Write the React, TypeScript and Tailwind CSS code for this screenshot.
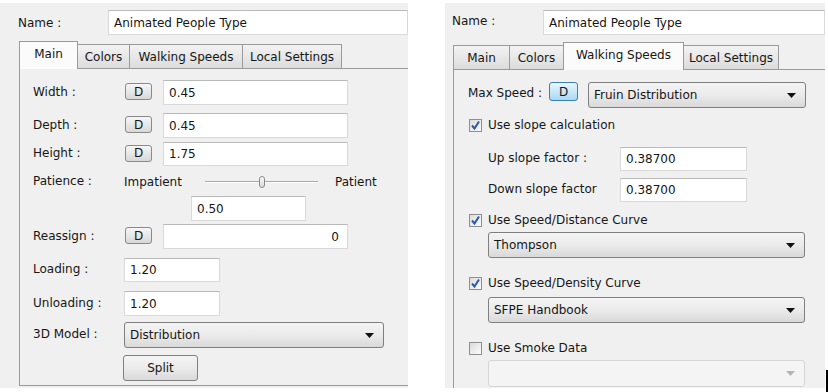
import React from "react";

const Field = ({ w, h = 25, value, right = false, grow = false }: { w?: number; h?: number; value: string; right?: boolean; grow?: boolean }) => (
  <div
    className={`${grow ? "flex-1" : ""} flex items-center bg-white border border-[#d9d9d9] border-t-[#b9b9b9] px-[5px] ${right ? "justify-end pr-[8px]" : ""}`}
    style={{ width: w, height: h }}
  >
    <span className="whitespace-nowrap">{value}</span>
  </div>
);

const DBtn = ({ blue = false, w = 27, h = 17 }: { blue?: boolean; w?: number; h?: number }) => (
  <div
    className={`flex items-center justify-center rounded-[3px] border text-[12px] ${
      blue
        ? "border-[#3c7fb1] bg-gradient-to-b from-[#e9f6fd] to-[#a8d9f4]"
        : "border-[#8a8a8a] bg-gradient-to-b from-[#f6f6f6] to-[#d8d8d8]"
    }`}
    style={{ width: w, height: h }}
  >
    D
  </div>
);

const Arrow = ({ c = "#111" }: { c?: string }) => (
  <svg width="9" height="5" viewBox="0 0 9 5">
    <path d="M0 0 H9 L4.5 5 Z" fill={c} />
  </svg>
);

const Select = ({ w, h = 26, value, disabled = false }: { w: number; h?: number; value: string; disabled?: boolean }) => (
  <div
    className={`flex items-center justify-between rounded-[3px] border pl-[5px] pr-[9px] ${
      disabled
        ? "border-[#d6d6d6] bg-[#f4f4f4]"
        : "border-[#7f7f7f] bg-gradient-to-b from-[#f4f4f4] via-[#ebebeb] to-[#d9d9d9]"
    }`}
    style={{ width: w, height: h }}
  >
    <span className="whitespace-nowrap">{value}</span>
    <Arrow c={disabled ? "#b4b4b4" : "#111"} />
  </div>
);

const Check = ({ checked }: { checked: boolean }) => (
  <div className="w-[13px] h-[13px] border border-[#8e8f8f] bg-gradient-to-br from-[#dcdcdc] to-[#fbfbfb] flex items-center justify-center">
    {checked && (
      <svg width="11" height="11" viewBox="0 0 11 11">
        <path d="M2 5.5 L4.5 8.5 L9 1.5" stroke="#2c5aa8" strokeWidth="2" fill="none" />
      </svg>
    )}
  </div>
);

const Tab = ({ label, w, sel = false, first = false }: { label: string; w: number; sel?: boolean; first?: boolean }) => (
  <div
    className={`flex items-center justify-center border-t border-l border-r border-[#9a9a9a] whitespace-nowrap ${
      first ? "" : "-ml-px"
    } ${
      sel
        ? "h-[28px] -mb-px bg-[#fbfbfb] relative z-10 pb-[3px]"
        : "h-[24px] bg-gradient-to-b from-[#f3f3f3] to-[#dcdcdc]"
    }`}
    style={{ width: w }}
  >
    {label}
  </div>
);

const LRow = ({ label, mt, h, children }: { label: string; mt: string; h: string; children?: React.ReactNode }) => (
  <div className={`flex items-center ${mt} ${h}`}>
    <span className="pl-[13px] w-[104px] shrink-0 whitespace-nowrap -mt-[2px]">{label}</span>
    {children}
  </div>
);

export default function App() {
  return (
    <div className="w-[828px] h-[392px] bg-white flex items-start overflow-hidden font-['DejaVu_Sans',Tahoma,sans-serif] text-[12px] text-[#161616]">
      {/* Left panel */}
      <div className="mt-[3px] w-[408px] h-[385px] bg-[#f0f0f0] flex flex-col shrink-0">
        <div className="mt-[7px] flex items-center h-[25px]">
          <span className="pl-[18px] w-[108px] shrink-0">Name :</span>
          <Field grow value="Animated People Type" />
        </div>
        <div className="mt-[6px] ml-[19px] flex items-end h-[27px]">
          <Tab label="Main" w={59} sel first />
          <Tab label="Colors" w={53} />
          <Tab label="Walking Speeds" w={114} />
          <Tab label="Local Settings" w={100} />
        </div>
        <div className="ml-[19px] mb-[2px] flex-1 border-l border-t border-b border-[#9a9a9a] flex flex-col">
          <LRow label="Width :" mt="mt-[11px]" h="h-[25px]">
            <div className="ml-[1px] -mt-[2px]"><DBtn /></div>
            <div className="ml-[11px]"><Field w={185} value="0.45" /></div>
          </LRow>
          <LRow label="Depth :" mt="mt-[8px]" h="h-[25px]">
            <div className="ml-[1px] -mt-[2px]"><DBtn /></div>
            <div className="ml-[11px]"><Field w={185} value="0.45" /></div>
          </LRow>
          <LRow label="Height :" mt="mt-[4px]" h="h-[24px]">
            <div className="ml-[1px] -mt-[2px]"><DBtn /></div>
            <div className="ml-[11px]"><Field w={185} h={24} value="1.75" /></div>
          </LRow>
          <LRow label="Patience :" mt="mt-[6px]" h="h-[20px]">
            <span className="whitespace-nowrap">Impatient</span>
            <div className="ml-[23px] w-[113px] h-[12px] flex items-center relative">
              <div className="w-full h-[2px] border-t border-[#a8a8a8] border-b border-b-white" />
              <div className="absolute left-[54px] top-0 w-[6px] h-[12px] rounded-[3px] border border-[#8a8a8a] bg-gradient-to-b from-[#fafafa] to-[#dadada]" />
            </div>
            <span className="ml-[17px] whitespace-nowrap">Patient</span>
          </LRow>
          <LRow label="" mt="mt-[4px]" h="h-[25px]">
            <div className="ml-[67px]"><Field w={115} value="0.50" /></div>
          </LRow>
          <LRow label="Reassign :" mt="mt-[3px]" h="h-[25px]">
            <div className="ml-[1px] -mt-[2px]"><DBtn /></div>
            <div className="ml-[11px]"><Field w={185} value="0" right /></div>
          </LRow>
          <LRow label="Loading :" mt="mt-[9px]" h="h-[24px]">
            <Field w={96} h={24} value="1.20" />
          </LRow>
          <LRow label="Unloading :" mt="mt-[9px]" h="h-[25px]">
            <Field w={96} value="1.20" />
          </LRow>
          <LRow label="3D Model :" mt="mt-[6px]" h="h-[26px]">
            <Select w={260} value="Distribution" />
          </LRow>
          <LRow label="" mt="mt-[7px]" h="h-[26px]">
            <div className="-ml-[1px] w-[75px] h-[26px] rounded-[3px] border border-[#7f7f7f] bg-gradient-to-b from-[#f4f4f4] via-[#ebebeb] to-[#d9d9d9] flex items-center justify-center">
              Split
            </div>
          </LRow>
        </div>
      </div>

      {/* Right panel */}
      <div className="mt-[3px] ml-[37px] w-[380px] h-[385px] bg-[#f0f0f0] flex flex-col shrink-0">
        <div className="mt-[7px] flex items-center h-[25px]">
          <span className="pl-[7px] w-[98px] shrink-0 -mt-[3px]">Name :</span>
          <Field grow value="Animated People Type" />
        </div>
        <div className="mt-[6px] ml-[8px] flex items-end h-[28px]">
          <Tab label="Main" w={57} first />
          <Tab label="Colors" w={55} />
          <Tab label="Walking Speeds" w={121} sel />
          <Tab label="Local Settings" w={96} />
        </div>
        <div className="ml-[8px] flex-1 border-l border-t border-[#9a9a9a] flex flex-col">
          <div className="mt-[12px] h-[26px] flex items-start">
            <span className="pl-[14px] w-[95px] shrink-0 whitespace-nowrap mt-[2px]">Max Speed :</span>
            <DBtn blue w={29} h={19} />
            <div className="ml-[10px]"><Select w={218} value="Fruin Distribution" /></div>
          </div>
          <div className="mt-[9px] h-[16px] flex items-center pl-[15px]">
            <Check checked />
            <span className="ml-[6px] whitespace-nowrap">Use slope calculation</span>
          </div>
          <div className="mt-[14px] h-[24px] flex items-center pl-[34px]">
            <span className="w-[132px] shrink-0 whitespace-nowrap -mt-[3px]">Up slope factor :</span>
            <Field w={127} h={24} value="0.38700" />
          </div>
          <div className="mt-[7px] h-[24px] flex items-center pl-[34px]">
            <span className="w-[132px] shrink-0 whitespace-nowrap -mt-[3px]">Down slope factor</span>
            <Field w={127} h={24} value="0.38700" />
          </div>
          <div className="mt-[10px] h-[16px] flex items-center pl-[15px]">
            <Check checked />
            <span className="ml-[6px] whitespace-nowrap">Use Speed/Distance Curve</span>
          </div>
          <div className="mt-[4px] pl-[34px]">
            <Select w={317} value="Thompson" />
          </div>
          <div className="mt-[17px] h-[16px] flex items-center pl-[15px]">
            <Check checked />
            <span className="ml-[6px] whitespace-nowrap">Use Speed/Density Curve</span>
          </div>
          <div className="mt-[6px] pl-[34px]">
            <Select w={317} value="SFPE Handbook" />
          </div>
          <div className="mt-[17px] h-[16px] flex items-center pl-[15px]">
            <Check checked={false} />
            <span className="ml-[6px] whitespace-nowrap">Use Smoke Data</span>
          </div>
          <div className="mt-[4px] pl-[34px]">
            <Select w={317} h={27} value="" disabled />
          </div>
        </div>
      </div>

      <div className="self-end ml-[1px] w-[2px] h-[22px] bg-black shrink-0" />
    </div>
  );
}
